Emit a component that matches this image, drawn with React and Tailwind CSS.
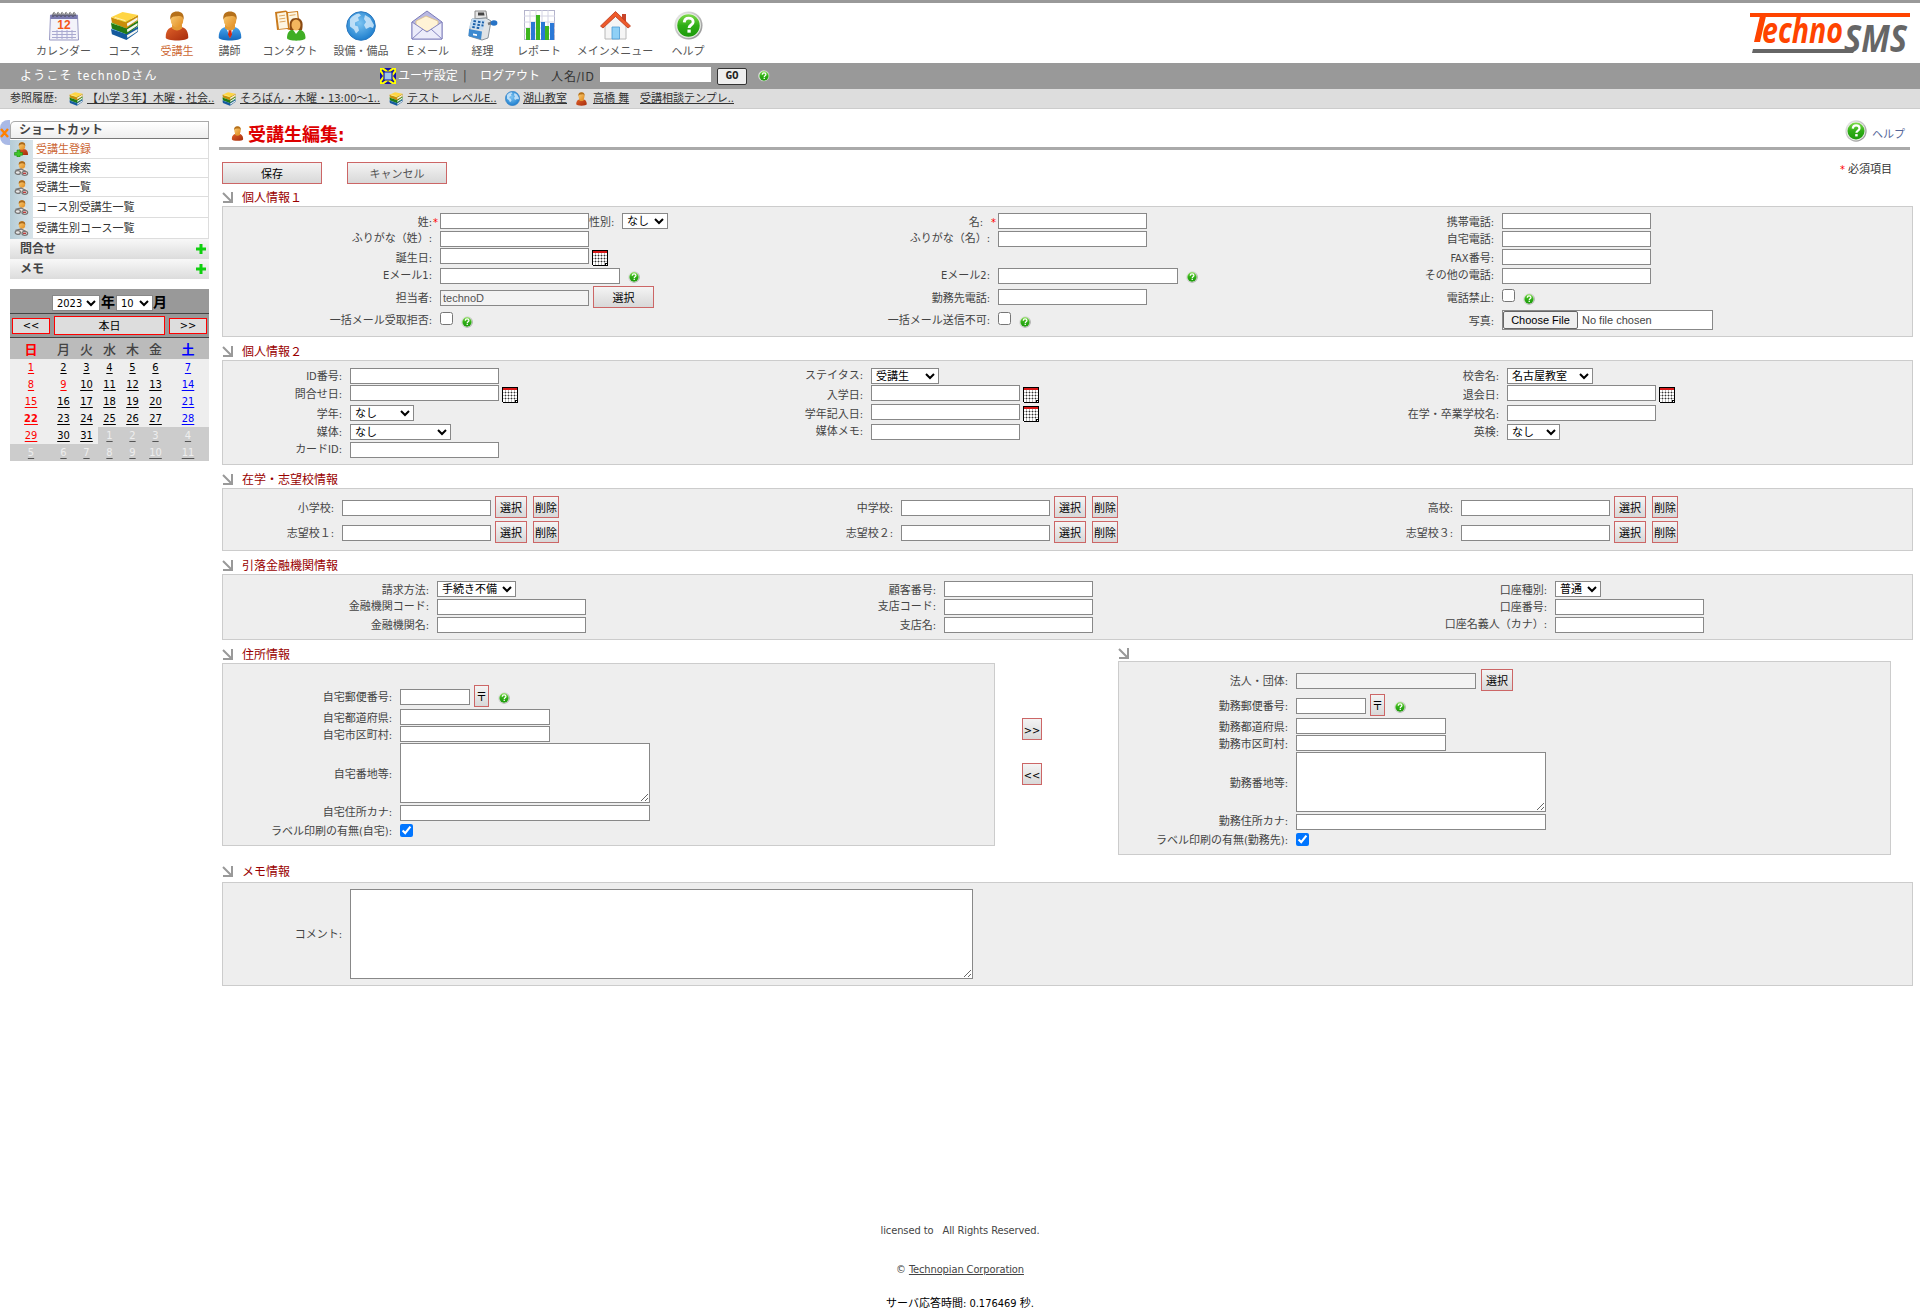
import React from "react";

const FONT = "font-['DejaVu_Sans_Condensed','DejaVu_Sans','Noto_Sans_CJK_JP',sans-serif]";

/* ---------- icons ---------- */
function Defs() {
  return (
    <svg className="absolute h-0 w-0" aria-hidden="true">
      <defs>
        <linearGradient id="gGreen" x1="0" y1="0" x2="0" y2="1">
          <stop offset="0" stopColor="#7edb4a" /><stop offset="0.5" stopColor="#2fae16" /><stop offset="1" stopColor="#1d9a0c" />
        </linearGradient>
        <linearGradient id="gRed" x1="0" y1="0" x2="1" y2="1">
          <stop offset="0" stopColor="#e0632a" /><stop offset="1" stopColor="#a62a0c" />
        </linearGradient>
        <linearGradient id="gSkin" x1="0" y1="0" x2="1" y2="1">
          <stop offset="0" stopColor="#fbd07a" /><stop offset="1" stopColor="#e08a1e" />
        </linearGradient>
        <linearGradient id="gBlue" x1="0" y1="0" x2="0" y2="1">
          <stop offset="0" stopColor="#4aa6ee" /><stop offset="1" stopColor="#1268bd" />
        </linearGradient>
        <radialGradient id="gGlobe" cx="0.45" cy="0.4" r="0.6">
          <stop offset="0" stopColor="#7cc4f2" /><stop offset="1" stopColor="#1f7fce" />
        </radialGradient>
        <linearGradient id="gRing" x1="0" y1="0" x2="1" y2="1">
          <stop offset="0" stopColor="#f2f2f2" /><stop offset="1" stopColor="#8a8a8a" />
        </linearGradient>
      </defs>
    </svg>
  );
}

function Help({ className }) {
  return (
    <svg viewBox="0 0 30 30" className={className}>
      <circle cx="15" cy="15" r="14.5" fill="url(#gRing)" />
      <circle cx="15" cy="15" r="12.8" fill="#e9efe6" />
      <circle cx="15" cy="15" r="11.6" fill="url(#gGreen)" />
      <path d="M10.6 11.8c.2-3 2.200-4.400 4.600-4.400 2.600 0 4.600 1.500 4.600 3.900 0 3.200-4.200 3.200-4.200 6.200" fill="none" stroke="#fff" strokeWidth="3" />
      <rect x="13.900" y="19.200" width="3.400" height="3.200" fill="#fff" />
    </svg>
  );
}

function CalendarBig() {
  return (
    <svg viewBox="0 0 30 30" className="h-[30px] w-[30px]">
      <path d="M1.500 4h27l1 25H.5z" fill="#f3f3fa" stroke="#9a9ac4" />
      <path d="M1.500 4h27l.2 4H1.300z" fill="#7a7ab0" />
      <path d="M3 20.500h24M3 23.500h24M3 26.500h24M8 19v9M13 19v9M18 19v9M23 19v9" stroke="#a9a9d0" strokeWidth="1" />
      <path d="M4 6V2.500q1.500-2 2 0V5M8 6V2.500q1.500-2 2 0V5M12 6V2.500q1.500-2 2 0V5M16 6V2.500q1.500-2 2 0V5M20 6V2.500q1.500-2 2 0V5M24 6V2.500q1.500-2 2 0V5" fill="none" stroke="#444" strokeWidth="1" />
      <text x="15" y="18" textAnchor="middle" fontSize="12" fontWeight="bold" fontFamily="Liberation Sans" fill="#f4581a">12</text>
    </svg>
  );
}

function Books({ className }) {
  const books = [[12, "#3f97e2", "#155a9e"], [6, "#58c23e", "#237a14"], [0, "#ffd544", "#c98d0a"]];
  return (
    <svg viewBox="0 0 30 30" className={className}>
      {books.map(([y, light, dark]) => (
        <g key={y} transform={`translate(0 ${y})`}>
          <path d="M1 6L2 11.500 17 17.500 29 9V3.500L16 11z" fill={dark} />
          <path d="M17.500 12.500L28.500 6v2.500L18 15.500z" fill="#f6f6f0" />
          <path d="M1 6L13 .5 29 3.500 16 11z" fill={light} />
        </g>
      ))}
      <path d="M5 6.200L16 9.500" stroke="#fff3b8" strokeWidth="1" />
    </svg>
  );
}

function Person({ className, blue }) {
  return (
    <svg viewBox="0 0 24 30" className={className}>
      <path d="M.7 26.500C.7 18 5 15.500 12 15.500s11.300 2.500 11.300 11c0 4-22.600 4-22.600 0z" fill={blue ? "url(#gBlue)" : "url(#gRed)"} />
      {blue && <path d="M8 16l4 11 4-11z" fill="#fff" />}
      {blue && <path d="M11 17.500h2l1 6-2 4-2-4z" fill="#d42a12" />}
      <path d="M7 13.500h10v4q-5 4-10 0z" fill="#e39a35" />
      <ellipse cx="12" cy="9" rx="6.300" ry="7.600" fill="url(#gSkin)" />
      <path d="M5.400 9C4.500 2.500 8 .5 12 .5s7.500 2 6.600 8.500C17.500 4.500 15 4.600 12 5.200 9 5.600 6.500 5 5.400 9z" fill="#b5701a" />
    </svg>
  );
}

function Contact() {
  return (
    <svg viewBox="0 0 32 31" className="h-[31px] w-[32px]">
      <path d="M1 2l11-1.500L14 2l10-1 2 17-11 2-2-1-10 1z" fill="#c97a1c" />
      <path d="M3 3.500l9-1.500 2 16-9 1zM14 3l9-1 1.500 14-9 2z" fill="#fdf6e2" />
      <path d="M5 6l6-.8M5.300 9l6-.8M5.600 12l6-.8M15.500 5.500l6-.8" stroke="#e0a860" strokeWidth="1" />
      <path d="M13 28c0-6 3-9 9-9s9.500 3 9.500 9c0 3.500-18.500 3.500-18.500 0z" fill="#3fae24" />
      <path d="M18.500 19l3.500 5 4-5z" fill="#fff" />
      <path d="M16 20c-1.500-9 1-12 6-12s8 3 6 12z" fill="#8a4a12" />
      <ellipse cx="22" cy="15" rx="4.500" ry="5.500" fill="#f4b65e" />
    </svg>
  );
}

function Globe({ className }) {
  return (
    <svg viewBox="0 0 30 30" className={className}>
      <circle cx="15" cy="15" r="14.300" fill="url(#gGlobe)" stroke="#2a78c0" strokeWidth="1" />
      <path d="M4 8q4-5 9-5.500l2 2-3 2 1 3-4 2 0 3 3 1 1 4-3 3-2-4-4-3zM19 4l5 3 4 7-1 3-3-1-4 2-2-4 2-3-2-3z" fill="#cfe8fa" opacity="0.850" />
    </svg>
  );
}

function Mail() {
  return (
    <svg viewBox="0 0 32 31" className="h-[31px] w-[32px]">
      <path d="M1 12L16 1l15 11v17H1z" fill="#b9b9e2" stroke="#7c7cb8" />
      <path d="M5 11l10-5 12 5v10H5z" fill="#fff3d6" stroke="#dcbf85" strokeWidth="0.800" />
      <path d="M1 12l15 10 15-10v17H1z" fill="#ececfa" stroke="#8585c0" />
      <path d="M1 29l11-10M31 29L20 19" stroke="#8585c0" />
    </svg>
  );
}

function Register() {
  return (
    <svg viewBox="0 0 31 31" className="h-[31px] w-[31px]">
      <path d="M8 1h11l1 7-12 1z" fill="#e4e4e4" stroke="#888" />
      <path d="M11 2.500h6l.5 3h-6.500z" fill="#444" />
      <path d="M5 9l14-1 5 3-3 17-6 2-13-4 1-8z" fill="#dfe3e6" stroke="#8a949c" />
      <path d="M5 8.500l13 1.500-2 10L2 17.500z" fill="#c4dcf2" />
      <path d="M6.500 11l2.500.4M11 11.700l2.500.4M15 12.300l2 .3M6 14l2.500.4M10.400 14.700l2.500.4M14.500 15.300l2 .3M5.300 17l2.500.4M9.700 17.700l2.500.4" stroke="#1b5fa8" strokeWidth="1.900" />
      <path d="M2 19l13 2.500-1 8L1.500 26z" fill="#3d8ad0" />
      <path d="M6 23.500l4 .8v1.800l-4-.8z" fill="#fff" />
      <path d="M21 14l6-2" stroke="#777" strokeWidth="2.500" />
      <ellipse cx="27" cy="13" rx="3.400" ry="2.800" fill="#2673c6" />
    </svg>
  );
}

function Report() {
  return (
    <svg viewBox="0 0 31 31" className="h-[31px] w-[31px]">
      <rect x="0.500" y="0.500" width="30" height="29" fill="#fff" stroke="#b4b4cc" />
      <path d="M0 6h31M0 12h31M0 18h31M0 24h31M6 0v30M12 0v30M18 0v30M24 0v30" stroke="#d4d4e4" strokeWidth="1" />
      <path d="M2 18h4v12H2zM12 5h4v25h-4zM21 16h4v14h-4z" fill="#3db51f" />
      <path d="M7 12h4v18H7zM17 12h4v18h-4zM26 13h4v17h-4z" fill="#2a78d6" />
    </svg>
  );
}

function House() {
  return (
    <svg viewBox="0 0 31 31" className="h-[31px] w-[31px]">
      <path d="M22 4h4v8h-4z" fill="#c8442a" />
      <path d="M5 15L15.500 5 26 15v14H5z" fill="#f5f5f5" stroke="#b8b8b8" />
      <path d="M12 17h7.500v12H12z" fill="#8fd0f6" stroke="#4a9ad4" strokeWidth="0.800" />
      <path d="M.5 16L15.500 1.500 30.500 16l-2.500 2L15.500 6.500 3 18z" fill="#ee5a2a" stroke="#b8371a" strokeWidth="0.800" />
    </svg>
  );
}

function DatePick({ className }) {
  return (
    <svg viewBox="0 0 16 16" shapeRendering="crispEdges" className={"h-[16px] w-[16px] shrink-0 " + className}>
      <path d="M0 0h16v16H1v-1H0z" fill="#000" />
      <rect x="1" y="1" width="14" height="2" fill="#d81818" />
      <rect x="1" y="3" width="14" height="12" fill="#fff" />
      <path d="M1 5.500h14M1 8.500h14M1 11.500h14M3.500 3v12M6.500 3v12M9.500 3v12M12.500 3v12" stroke="#b4b4b4" strokeWidth="1" />
      <path d="M3 5.500h1m2 0h1m2 0h1m2 0h1M3 8.500h1m2 0h1m2 0h1m2 0h1M3 11.500h1m2 0h1m2 0h1m2 0h1" stroke="#333" strokeWidth="1" />
      <path d="M13 13h3v3h-3z" fill="#000" /><path d="M14 14h1v1h-1z" fill="#fff" />
    </svg>
  );
}

function SectionArrow() {
  return (
    <svg viewBox="0 0 11 11" className="mt-[9px] h-[11px] w-[11px] shrink-0">
      <path d="M1 1l8.500 8.500M10 0v10H1" fill="none" stroke="#999" strokeWidth="2" />
    </svg>
  );
}

function SideIcon({ add }) {
  return (
    <svg viewBox="0 0 15 15" className="h-[15px] w-[15px]">
      <path d="M3 13c0-5 2-6 5.500-6S14 8 14 13z" fill={add ? "url(#gRed)" : "#e9e4da"} />
      <ellipse cx="8" cy="4" rx="3.200" ry="3.800" fill="url(#gSkin)" />
      <path d="M4.800 4C4.500 1 6 .2 8 .2S11.500 1 11.200 4q-.7-2-3.200-1.800T4.800 4z" fill="#a8671a" />
      {add ? (
        <path d="M3 8h3v2.500h2.500v2.700H6V15H3v-1.800H.5v-2.700H3z" fill="#3fc52a" stroke="#1f8a12" strokeWidth="0.600" />
      ) : (
        <g fill="#e6e6e6" stroke="#777" strokeWidth="1.300">
          <path d="M1.500 9.500L7 8l5 2.500" /><ellipse cx="3.800" cy="11.500" rx="2.600" ry="1.900" /><ellipse cx="10.800" cy="12.300" rx="2.800" ry="2" />
          <path d="M9 12.300h3" stroke="#b33" />
        </g>
      )}
    </svg>
  );
}

function Plus() {
  return (
    <svg viewBox="0 0 10 10" className="h-[10px] w-[10px]"><path d="M3.500 0h3v3.500H10v3H6.500V10h-3V6.500H0v-3h3.500z" fill="#0fcf0f" /></svg>
  );
}

function Logo() {
  return (
    <svg viewBox="0 -4 160 56" className="h-[56px] w-[160px] overflow-visible">
      <path d="M0 0h160v4H0z" fill="#ff4400" />
      <path d="M3 36h103l-3 4H2z" fill="#666" />
      <path d="M10 3h6l-6 26H4z" fill="#ff4400" />
      <text x="12" y="29.500" fontSize="35" fontWeight="bold" fontStyle="italic" fontFamily="Open Sans, sans-serif" fill="#ff4400" textLength="81" lengthAdjust="spacingAndGlyphs">echno</text>
      <text x="94" y="38.500" fontSize="37" fontWeight="bold" fontStyle="italic" fontFamily="Open Sans, sans-serif" fill="#666" textLength="63" lengthAdjust="spacingAndGlyphs">SMS</text>
    </svg>
  );
}

/* ---------- form controls ---------- */
const Input = ({ w = "w-[149px]", mt = "", ...rest }) => (
  <input className={`block h-[16px] shrink-0 rounded-none border border-[#888] bg-white px-[2px] font-['Liberation_Sans',sans-serif] text-[11px] text-[#555] outline-none disabled:bg-[#f3f3f3] ${w} ${mt}`} {...rest} />
);
const Select = ({ w, mt = "", children }) => (
  <select className={`block h-[16px] shrink-0 rounded-none border border-[#888] bg-white p-0 text-[11px] font-normal leading-[14px] text-black ${w} ${mt}`}>
    <option>{children}</option>
  </select>
);
const Btn = ({ w, mt = "", color = "text-black", children }) => (
  <button className={`flex h-[22px] shrink-0 items-center justify-center whitespace-nowrap border border-[#cc6666] bg-linear-to-b from-[#f4f4f4] to-[#d8d8d8] pt-[3px] text-[11px] leading-[14px] ${color} ${w} ${mt}`}>{children}</button>
);
const Check = ({ mt = "", on }) => <input type="checkbox" defaultChecked={on} className={`m-0 block h-[13px] w-[13px] shrink-0 ${mt}`} />;
const Star = () => <span className="-mr-[7px] inline-block w-[7px] text-center text-[#f00]">*</span>;
const SmallHelp = ({ className }) => <Help className={"h-[12px] w-[12px] shrink-0 " + className} />;

/* rows: [height, label, label top padding, control] */
function Column({ lw, w = "w-[560px]", rows }) {
  return (
    <div className={`shrink-0 ${w}`}>
      {rows.map(([h, label, lt, control], i) => (
        <div key={i} className={`flex items-start ${h}`}>
          <div className={`shrink-0 whitespace-nowrap pr-[8px] text-right text-[11px] leading-[16px] text-[#444] ${lw} ${lt}`}>{label}</div>
          {control}
        </div>
      ))}
    </div>
  );
}
const Heading = ({ children, h = "h-[23px]" }) => (
  <div className={`flex items-start ${h}`}>
    <SectionArrow />
    <h2 className="ml-[9px] mt-[7px] text-[12px] leading-[16px] text-[#900]">{children}</h2>
  </div>
);
const Panel = ({ className, children }) => <div className={`flex border border-[#ccc] bg-[#eee] ${className}`}>{children}</div>;

const School = () => (
  <>
    <Input mt="mt-[4px]" />
    <Btn w="w-[32px]" mt="ml-[4px]">選択</Btn>
    <Btn w="w-[26px]" mt="ml-[6px]">削除</Btn>
  </>
);
const Postal = () => (
  <>
    <Input w="w-[70px]" mt="mt-[4px]" />
    <Btn w="w-[15px]" mt="ml-[4px]">〒</Btn>
    <SmallHelp className="ml-[9px] mt-[7px]" />
  </>
);
const Area = ({ className }) => <textarea className={`block shrink-0 resize rounded-none border border-[#888] bg-white outline-none ${className}`} />;

const addressRows = (p, last) => [
  ["h-[24px]", `${p}郵便番号:`, "pt-[5px]", <Postal />],
  ["h-[17px]", `${p}都道府県:`, "pt-[2px]", <Input w="w-[150px]" />],
  ["h-[17px]", `${p}市区町村:`, "pt-[2px]", <Input w="w-[150px]" />],
  ["h-[62px]", `${p}番地等:`, "pt-[24px]", <Area className="h-[60px] w-[250px]" />],
  ["h-[19px]", `${p}住所カナ:`, "", <Input w="w-[250px]" />],
  ["h-[14px]", `ラベル印刷の有無(${last}):`, "", <Check on />],
];

/* ---------- header ---------- */
const NAV = [
  ["カレンダー", "w-[73px]", <CalendarBig />],
  ["コース", "w-[49px]", <Books className="h-[30px] w-[29px]" />],
  ["受講生", "w-[56px]", <Person className="h-[30px] w-[24px]" />],
  ["講師", "w-[49px]", <Person blue className="h-[30px] w-[24px]" />],
  ["コンタクト", "w-[72px]", <Contact />],
  ["設備・備品", "w-[70px]", <Globe className="h-[30px] w-[30px]" />],
  ["Ｅメール", "w-[62px]", <Mail />],
  ["経理", "w-[49px]", <Register />],
  ["レポート", "w-[64px]", <Report />],
  ["メインメニュー", "w-[88px]", <House />],
  ["ヘルプ", "w-[58px]", <Help className="h-[29px] w-[29px]" />],
];
const HISTORY = [
  ["【小学３年】木曜・社会..", "w-[153px]", <Books className="h-[14px] w-[14px]" />],
  ["そろばん・木曜・13:00～1..", "w-[167px]", <Books className="h-[14px] w-[14px]" />],
  ["テスト　レベルE..", "w-[116px]", <Books className="h-[14px] w-[14px]" />],
  ["湖山教室", "w-[70px]", <Globe className="h-[15px] w-[15px]" />],
  ["高橋 舞", "w-[65px]", <Person className="h-[14px] w-[13px]" />],
  ["受講相談テンプレ..", "w-[110px]", null],
];

function Header() {
  return (
    <header>
      <div className="flex h-[63px] justify-between border-t-[3px] border-[#999]">
        <nav className="flex pl-[27px]">
          {NAV.map(([t, w, icon]) => (
            <a key={t} className={`flex flex-col items-center pt-[7px] ${w}`}>
              <span className="flex h-[31px] items-center">{icon}</span>
              <span className={`mt-[4px] whitespace-nowrap text-[11px] leading-[14px] ${t === "受講生" ? "text-[#c63]" : "text-[#555]"}`}>{t}</span>
            </a>
          ))}
        </nav>
        <div className="mr-[10px] mt-[6px]"><Logo /></div>
      </div>
      <div className="flex h-[26px] items-center whitespace-nowrap bg-[#999] text-[12px] leading-[16px] text-white">
        <span className="w-[360px] pl-[20px] tracking-[1.200px]">ようこそ technoDさん</span>
        <svg viewBox="0 0 16 16" className="ml-[20px] h-[16px] w-[16px]">
          <rect width="16" height="16" fill="#ff0" />
          <path d="M0 4l3 4-3 4zM16 4l-3 4 3 4zM4 0l4 3 4-3zM4 16l4-3 4 3z" fill="#11a" />
          <path d="M2 2l3 2h6l3-2-2 3v6l2 3-3-2H5l-3 2 2-3V5z" fill="#9fc4e8" stroke="#11a" strokeWidth="1.200" />
        </svg>
        <span className="ml-[2px] w-[65px]">ユーザ設定</span>
        <span className="w-[17px] text-[#444]">|</span>
        <span className="w-[71px]">ログアウト</span>
        <span className="w-[49px] pt-[2px] tracking-[0.900px] text-[#333]">人名/ID</span>
        <input className="mb-[3px] h-[15px] w-[111px] bg-white outline-none" />
        <button className="ml-[6px] flex h-[17px] w-[30px] items-center justify-center rounded-[2px] border border-[#333] bg-[#eee] font-['DejaVu_Sans_Mono',monospace] text-[11px] font-bold text-[#222]">GO</button>
        <SmallHelp className="ml-[11px]" />
      </div>
      <div className="flex h-[20px] items-center whitespace-nowrap border-b border-[#ccc] bg-[#ddd] text-[11px] leading-[14px] text-[#333]">
        <span className="w-[69px] pl-[10px]">参照履歴:</span>
        {HISTORY.map(([t, w, icon]) => (
          <span key={t} className={`flex items-center ${w}`}>
            {icon && <span className="w-[18px] shrink-0">{icon}</span>}
            <a className="underline">{t}</a>
          </span>
        ))}
      </div>
    </header>
  );
}

/* ---------- sidebar ---------- */
const MENU = [
  ["受講生登録", "h-[19px]"],
  ["受講生検索", "h-[19px]"],
  ["受講生一覧", "h-[19px]"],
  ["コース別受講生一覧", "h-[21px]"],
  ["受講生別コース一覧", "h-[21px]"],
];
const DAYS = [
  [1, 2, 3, 4, 5, 6, 7], [8, 9, 10, 11, 12, 13, 14], [15, 16, 17, 18, 19, 20, 21],
  [22, 23, 24, 25, 26, 27, 28], [29, 30, 31, 1, 2, 3, 4], [5, 6, 7, 8, 9, 10, 11],
];
function dayClass(r, c) {
  if (r === 5 || (r === 4 && c > 2)) return "bg-[#ccc] text-[#eee] decoration-[#555]";
  if (r === 3 && c === 0) return "text-[#f00] font-bold";
  if (c === 0 || (r === 1 && c === 1)) return "text-[#f00]";
  if (c === 6) return "text-[#00f]";
  return "text-black";
}
const CAL_GRID = "grid grid-cols-[42px_23px_23px_23px_23px_23px_42px]";

function Sidebar() {
  return (
    <aside className="flex w-[219px] shrink-0 pt-[12px]">
      <div className="-mt-px flex h-[25px] w-[10px] items-center overflow-hidden rounded-l-[8px] bg-[#a9b9e6]">
        <svg viewBox="0 0 9 10" className="h-[10px] w-[9px]"><path d="M1 1l7 8M8 1L1 9" stroke="#ff8000" strokeWidth="2.400" /></svg>
      </div>
      <div className="w-[199px]">
        <div className="h-[18px] rounded-tl-[5px] border border-[#aaa] border-b-[#777] bg-linear-to-b from-white to-[#eee] pl-[8px] text-[12px] font-bold leading-[16px] text-[#444]">ショートカット</div>
        <div className="border-r border-[#ddd] pt-px">
          {MENU.map(([t, h], i) => (
            <div key={t} className={`flex ${h}`}>
              <span className="flex w-[23px] shrink-0 items-center justify-center bg-linear-to-r from-[#b5ccd6] to-[#d8e4ea]"><SideIcon add={i === 0} /></span>
              <a className={`flex grow items-center border-b border-[#ddd] pl-[3px] pt-[2px] text-[11px] leading-[14px] ${i === 0 ? "text-[#c63]" : "text-[#333]"}`}>{t}</a>
            </div>
          ))}
        </div>
        {["問合せ", "メモ"].map((t) => (
          <div key={t} className="flex h-[20px] items-center justify-between bg-linear-to-b from-[#f8f8f8] to-[#dcdcdc] pl-[10px] pr-[3px] text-[12px] font-bold leading-[16px] text-[#444]">
            {t}<Plus />
          </div>
        ))}
        <div className="mt-[10px] bg-[#eee]">
          <div className="flex h-[25px] items-start border-b border-[#444] bg-[#999] pl-[42px] pt-[6px] text-[14px] font-bold leading-[15px] text-black">
            <Select w="w-[48px]">2023</Select>
            <span className="w-[16px] pl-px">年</span>
            <Select w="w-[37px]">10</Select>
            <span>月</span>
          </div>
          <div className="flex h-[24px] items-center gap-[4px] border-b border-[#444] bg-[#999] pl-[2px] text-[11px] leading-[14px] text-black">
            <button className="h-[16px] w-[38px] border border-[#f00] bg-[#ddd]">&lt;&lt;</button>
            <button className="h-[19px] w-[111px] border border-[#f00] bg-[#ddd] pt-[2px]">本日</button>
            <button className="h-[16px] w-[38px] border border-[#f00] bg-[#ddd]">&gt;&gt;</button>
          </div>
          <div className={`${CAL_GRID} h-[21px] bg-[#bbb] text-center text-[13px] leading-[23px] text-[#444]`}>
            {["日", "月", "火", "水", "木", "金", "土"].map((d, i) => (
              <span key={d} className={i === 0 ? "font-bold text-[#f00]" : i === 6 ? "font-bold text-[#00f]" : "font-medium"}>{d}</span>
            ))}
          </div>
          {DAYS.map((row, r) => (
            <div key={r} className={`${CAL_GRID} h-[17px] text-center text-[11px] leading-[16px]`}>
              {row.map((d, c) => <a key={c} className={`h-[17px] pt-px underline underline-offset-2 ${dayClass(r, c)}`}>{d}</a>)}
            </div>
          ))}
        </div>
      </div>
    </aside>
  );
}

/* ---------- page ---------- */
export default function App() {
  return (
    <div className={`flex h-[1311px] w-[1920px] flex-col overflow-hidden bg-white ${FONT}`}>
      <Defs />
      <Header />
      <div className="flex h-[1111px]">
        <Sidebar />
        <main className="w-[1694px]">
          <div className="flex h-[41px] w-[1691px] justify-between border-b-[3px] border-[#aaa]">
            <div className="flex items-start">
              <Person className="ml-[12px] mt-[17px] h-[15px] w-[13px]" />
              <h1 className="ml-[4px] mt-[14px] text-[18px] font-bold leading-[24px] text-[#d00]">受講生編集:</h1>
            </div>
            <div className="flex items-start">
              <Help className="mt-[11px] h-[22px] w-[22px]" />
              <span className="ml-[5px] mr-[5px] mt-[19px] text-[11px] leading-[14px] text-[#556699]">ヘルプ</span>
            </div>
          </div>
          <div className="pl-[3px]">
            <div className="flex h-[33px] pt-[12px]">
              <Btn w="w-[100px]">保存</Btn>
              <Btn w="w-[100px]" mt="ml-[25px]" color="text-[#555]">キャンセル</Btn>
              <span className="ml-auto mr-[21px] text-[11px] leading-[16px] text-[#333]"><span className="text-[#f00]">*</span> 必須項目</span>
            </div>

            <Heading>個人情報１</Heading>
            <Panel className="h-[131px] pt-[6px]">
              <Column lw="w-[217px]" rows={[
                ["h-[18px]", <>姓:<Star /></>, "pt-[2px]", <><Input /><span className="w-[33px] pt-[2px] text-[11px] leading-[16px] text-[#444]">性別:</span><Select w="w-[46px]">なし</Select></>],
                ["h-[17px]", "ふりがな（姓）:", "", <Input />],
                ["h-[20px]", "誕生日:", "pt-[3px]", <><Input /><DatePick className="ml-[3px] mt-[2px]" /></>],
                ["h-[18px]", "Eメール1:", "", <><Input w="w-[180px]" /><SmallHelp className="ml-[8px] mt-[3px]" /></>],
                ["h-[23px]", "担当者:", "pt-[5px]", <><Input mt="mt-[4px]" disabled defaultValue="technoD" /><Btn w="w-[61px]" mt="ml-[4px]">選択</Btn></>],
                ["h-[20px]", "一括メール受取拒否:", "pt-[4px]", <><Check mt="mt-[3px]" /><SmallHelp className="ml-[8px] mt-[7px]" /></>],
              ]} />
              <Column lw="w-[215px]" rows={[
                ["h-[18px]", <>名:<span className="inline-block w-[7px]" /><Star /></>, "pt-[2px]", <Input />],
                ["h-[17px]", "ふりがな（名）:", "", <Input />],
                ["h-[20px]", "", "", null],
                ["h-[18px]", "Eメール2:", "", <><Input w="w-[180px]" /><SmallHelp className="ml-[8px] mt-[3px]" /></>],
                ["h-[23px]", "勤務先電話:", "pt-[5px]", <Input mt="mt-[3px]" />],
                ["h-[20px]", "一括メール送信不可:", "pt-[4px]", <><Check mt="mt-[3px]" /><SmallHelp className="ml-[8px] mt-[7px]" /></>],
              ]} />
              <Column lw="w-[159px]" rows={[
                ["h-[18px]", "携帯電話:", "pt-[2px]", <Input />],
                ["h-[17px]", "自宅電話:", "pt-px", <Input />],
                ["h-[20px]", "FAX番号:", "pt-[3px]", <Input mt="mt-px" />],
                ["h-[18px]", "その他の電話:", "", <Input />],
                ["h-[23px]", "電話禁止:", "pt-[5px]", <><Check mt="mt-[3px]" /><SmallHelp className="ml-[8px] mt-[7px]" /></>],
                ["h-[22px]", "写真:", "pt-[5px]", <input type="file" className="mt-px h-[20px] w-[211px] border border-[#888] bg-white font-['Liberation_Sans',sans-serif] text-[11px] leading-[16px] text-[#444] file:mr-[4px] file:h-[18px] file:w-[75px] file:rounded-[2px] file:border file:border-solid file:border-[#666] file:bg-[#efefef] file:p-0 file:font-['Liberation_Sans',sans-serif] file:text-[11px] file:text-black" />],
              ]} />
            </Panel>

            <Heading>個人情報２</Heading>
            <Panel className="h-[105px] pt-[7px]">
              <Column lw="w-[127px]" rows={[
                ["h-[17px]", "ID番号:", "pt-px", <Input />],
                ["h-[20px]", "問合せ日:", "pt-[2px]", <><Input /><DatePick className="ml-[3px] mt-[2px]" /></>],
                ["h-[19px]", "学年:", "pt-[2px]", <Select w="w-[64px]">なし</Select>],
                ["h-[18px]", "媒体:", "pt-px", <Select w="w-[101px]">なし</Select>],
                ["h-[16px]", "カードID:", "", <Input />],
              ]} />
              <Column lw="w-[88px]" rows={[
                ["h-[17px]", "ステイタス:", "", <Select w="w-[68px]">受講生</Select>],
                ["h-[19px]", "入学日:", "pt-[3px]", <><Input /><DatePick className="ml-[3px] mt-[2px]" /></>],
                ["h-[20px]", "学年記入日:", "pt-[3px]", <><Input /><DatePick className="ml-[3px] mt-[2px]" /></>],
                ["h-[18px]", "媒体メモ:", "", <Input />],
              ]} />
              <Column lw="w-[164px]" rows={[
                ["h-[17px]", "校舎名:", "pt-px", <Select w="w-[86px]">名古屋教室</Select>],
                ["h-[20px]", "退会日:", "pt-[3px]", <><Input /><DatePick className="ml-[3px] mt-[2px]" /></>],
                ["h-[19px]", "在学・卒業学校名:", "pt-[2px]", <Input />],
                ["h-[18px]", "英検:", "pt-px", <Select w="w-[53px]">なし</Select>],
              ]} />
            </Panel>

            <Heading>在学・志望校情報</Heading>
            <Panel className="h-[63px] pt-[7px]">
              {[["w-[119px]", "小学校:", "志望校１:"], ["w-[118px]", "中学校:", "志望校２:"], ["w-[118px]", "高校:", "志望校３:"]].map(([lw, a, b]) => (
                <Column key={a} lw={lw} rows={[["h-[25px]", a, "pt-[5px]", <School />], ["h-[22px]", b, "pt-[5px]", <School />]]} />
              ))}
            </Panel>

            <Heading>引落金融機関情報</Heading>
            <Panel className="h-[66px] pt-[6px]">
              <Column lw="w-[214px]" rows={[
                ["h-[18px]", "請求方法:", "pt-[2px]", <Select w="w-[79px]">手続き不備</Select>],
                ["h-[18px]", "金融機関コード:", "", <Input />],
                ["h-[16px]", "金融機関名:", "pt-px", <Input />],
              ]} />
              <Column lw="w-[161px]" rows={[
                ["h-[18px]", "顧客番号:", "pt-[2px]", <Input />],
                ["h-[18px]", "支店コード:", "", <Input />],
                ["h-[16px]", "支店名:", "pt-px", <Input />],
              ]} />
              <Column lw="w-[212px]" rows={[
                ["h-[18px]", "口座種別:", "pt-[2px]", <Select w="w-[46px]">普通</Select>],
                ["h-[18px]", "口座番号:", "pt-px", <Input />],
                ["h-[16px]", "口座名義人（カナ）:", "", <Input />],
              ]} />
            </Panel>

            <div className="flex h-[217px]">
              <div className="w-[773px]">
                <Heading>住所情報</Heading>
                <Panel className="h-[183px] pt-[21px]">
                  <Column lw="w-[177px]" rows={addressRows("自宅", "自宅")} />
                </Panel>
              </div>
              <div className="flex w-[123px] flex-col gap-[23px] pl-[27px] pt-[78px]">
                <Btn w="w-[20px]">&gt;&gt;</Btn>
                <Btn w="w-[20px]">&lt;&lt;</Btn>
              </div>
              <div className="-mt-px w-[773px]">
                <Heading h="h-[22px]" />
                <Panel className="h-[194px] pt-[7px]">
                  <Column lw="w-[177px]" rows={[
                    ["h-[25px]", "法人・団体:", "pt-[5px]", <><Input w="w-[180px]" mt="mt-[4px]" disabled /><Btn w="w-[32px]" mt="ml-[5px]">選択</Btn></>],
                    ...addressRows("勤務", "勤務先"),
                  ]} />
                </Panel>
              </div>
            </div>

            <Heading h="h-[25px]">メモ情報</Heading>
            <Panel className="h-[104px] pt-[6px]">
              <Column lw="w-[127px]" rows={[["h-[90px]", "コメント:", "pt-[38px]", <Area className="h-[90px] w-[623px]" />]]} />
            </Panel>
          </div>
        </main>
      </div>
      <footer className="flex flex-col items-center whitespace-pre text-[11px] leading-[14px] tracking-[-0.100px] text-[#444]">
        <p className="mt-[4px]">{"licensed to   All Rights Reserved."}</p>
        <p className="mt-[25px]">© <a className="underline">Technopian Corporation</a></p>
        <p className="mt-[20px] tracking-normal text-black">サーバ応答時間: 0.176469 秒.</p>
      </footer>
    </div>
  );
}
